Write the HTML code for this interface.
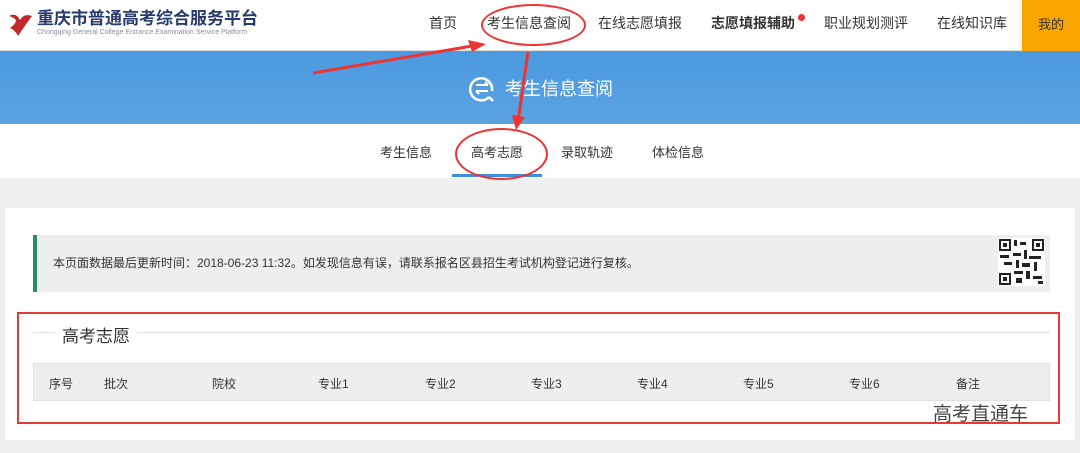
<!DOCTYPE html>
<html><head><meta charset="utf-8"><style>
*{margin:0;padding:0;box-sizing:border-box}
body{width:1080px;height:453px;overflow:hidden;background:#f0f0f0;font-family:"Liberation Sans","Noto Sans CJK SC",sans-serif;position:relative;color:#333}
.hdr{position:absolute;left:0;top:0;width:1080px;height:51px;background:#fff;border-bottom:1px solid #ddd}
.logo{position:absolute;left:37px;top:9px;font-size:17px;font-weight:bold;color:#263a6b;line-height:20px}
.logo small{display:block;font-size:7px;font-weight:normal;color:#8a8fa0;line-height:8px}
.nav{position:absolute;top:13px;font-size:14px;color:#333}
.me{position:absolute;left:1022px;top:0;width:58px;height:51px;background:#fba600;font-size:13px;text-align:center;line-height:50px;color:#333}
.ban{position:absolute;left:0;top:51px;width:1080px;height:73px;background:linear-gradient(180deg,#4c9ae0,#5aa2e2)}
.ban .t{position:absolute;left:505px;top:24px;color:#fff;font-size:18px}
.sub{position:absolute;left:0;top:124px;width:1080px;height:54px;background:#fff}
.sub span{position:absolute;top:18px;font-size:13px}
.card{position:absolute;left:5px;top:208px;width:1070px;height:232px;background:#fff}
.note{position:absolute;left:33px;top:235px;width:1017px;height:57px;background:#eee;border-left:4px solid #2a8a6e;font-size:12px;line-height:57px;padding-left:16px}
.red{position:absolute;left:17px;top:312px;width:1043px;height:112px;border:2px solid #e83838}
.leg{position:absolute;left:33px;top:332px;width:1017px;border-top:1px solid #ddd}
.legt{position:absolute;left:55px;top:322px;background:#fff;padding:0 7px;font-size:17px}
.th{position:absolute;left:33px;top:363px;width:1017px;height:38px;background:#eee;border:1px solid #e0e0e0;font-size:12px}
.th span{position:absolute;top:11px}
.wm{position:absolute;left:933px;top:399px;font-size:19px;color:#444}
.circ{position:absolute;border:2px solid #e33;border-radius:50%}
</style></head><body>
<div class="hdr">
<svg style="position:absolute;left:6px;top:10px" width="30" height="30" viewBox="0 0 30 30"><path d="M3 6 Q10 2 14 10 Q18 3 26 6 Q20 14 12 26 Q9 20 4 18 Q10 14 10 10 Q7 7 3 6Z" fill="#c1272d"/></svg>
<div class="logo">重庆市普通高考综合服务平台<small>Chongqing General College Entrance Examination Service Platform</small></div>
<span class="nav" style="left:429px">首页</span>
<span class="nav" style="left:487px">考生信息查阅</span>
<span class="nav" style="left:598px">在线志愿填报</span>
<span class="nav" style="left:711px;font-weight:bold">志愿填报辅助</span>
<span style="position:absolute;left:798px;top:14px;width:7px;height:7px;border-radius:50%;background:#e33"></span>
<span class="nav" style="left:824px">职业规划测评</span>
<span class="nav" style="left:937px">在线知识库</span>
<div class="me">我的</div>
</div>
<div class="ban">
<svg style="position:absolute;left:467px;top:22px" width="30" height="30" viewBox="0 0 30 30"><path d="M22 24 A11 11 0 1 1 25 18" fill="none" stroke="#fff" stroke-width="2.5"/><path d="M22 24 L26 28" stroke="#fff" stroke-width="2.5"/><path d="M9 12h12M18 9l3 3M9 18h12M12 21l-3-3" stroke="#fff" stroke-width="2" fill="none"/></svg>
<div class="t">考生信息查阅</div>
</div>
<div class="sub">
<span style="left:380px">考生信息</span>
<span style="left:471px">高考志愿</span>
<span style="left:561px">录取轨迹</span>
<span style="left:652px">体检信息</span>
<div style="position:absolute;left:452px;top:50px;width:90px;height:3px;background:#3b8fdd"></div>
</div>
<div class="card"></div>
<div class="note">本页面数据最后更新时间：2018-06-23 11:32。如发现信息有误，请联系报名区县招生考试机构登记进行复核。</div>
<svg style="position:absolute;left:998px;top:238px" width="47" height="48" viewBox="0 0 47 48"><rect width="47" height="48" fill="#fff"/><g fill="#222"><rect x="1" y="1" width="12" height="12"/><rect x="34" y="1" width="12" height="12"/><rect x="1" y="35" width="12" height="12"/></g><g fill="#fff"><rect x="3" y="3" width="8" height="8"/><rect x="36" y="3" width="8" height="8"/><rect x="3" y="37" width="8" height="8"/></g><g fill="#222"><rect x="5" y="5" width="4" height="4"/><rect x="38" y="5" width="4" height="4"/><rect x="5" y="39" width="4" height="4"/><rect x="16" y="2" width="3" height="6"/><rect x="22" y="4" width="6" height="3"/><rect x="15" y="15" width="8" height="3"/><rect x="26" y="12" width="3" height="9"/><rect x="2" y="17" width="9" height="3"/><rect x="31" y="18" width="12" height="3"/><rect x="18" y="22" width="3" height="8"/><rect x="6" y="24" width="8" height="3"/><rect x="24" y="25" width="8" height="4"/><rect x="36" y="24" width="3" height="9"/><rect x="16" y="33" width="9" height="3"/><rect x="28" y="33" width="4" height="8"/><rect x="18" y="40" width="6" height="5"/><rect x="35" y="38" width="9" height="3"/><rect x="40" y="43" width="5" height="3"/></g></svg>
<div class="leg"></div><div class="legt">高考志愿</div>
<div class="th">
<span style="left:15px">序号</span><span style="left:70px">批次</span><span style="left:178px">院校</span><span style="left:284px">专业1</span><span style="left:391px">专业2</span><span style="left:497px">专业3</span><span style="left:603px">专业4</span><span style="left:709px">专业5</span><span style="left:815px">专业6</span><span style="left:922px">备注</span>
</div>
<div class="red"></div>
<div class="wm">高考直通车</div>
<div class="circ" style="left:481px;top:4px;width:105px;height:42px"></div>
<div class="circ" style="left:455px;top:128px;width:93px;height:52px"></div>
<svg style="position:absolute;left:0;top:0" width="1080" height="453"><path d="M313 73 L478 45" stroke="#e33" stroke-width="3"/><path d="M486 44 L468 40 L472 52Z" fill="#e33"/><path d="M528 52 L518 122" stroke="#e33" stroke-width="3"/><path d="M516 130 L512 115 L525 117Z" fill="#e33"/></svg>
</body></html>
